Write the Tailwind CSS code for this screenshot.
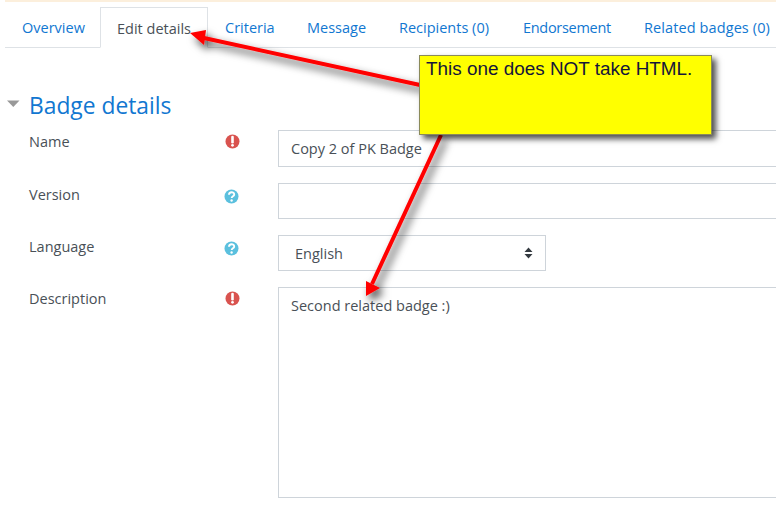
<!DOCTYPE html>
<html lang="en">
<head>
<meta charset="utf-8" />
<meta name="viewport" content="width=device-width, initial-scale=1" />
<title>Edit details</title>
<script src="https://cdn.jsdelivr.net/npm/@tailwindcss/browser@4"></script>
</head>
<body class="relative w-[776px] h-[509px] overflow-hidden bg-white font-['Open_Sans',sans-serif] text-[14.5px] text-[#495057]">
  <!-- top alert edge -->
  <div class="ml-[5px] h-[2px] bg-[#fcefdc]"></div>

  <!-- tabs -->
  <nav class="ml-[5px] mt-[5px] h-[41px] flex border-b border-[#dee2e6] whitespace-nowrap text-[#1177d1]">
    <a class="w-[95px] shrink-0 pl-[17px] pt-[10px]">Overview</a>
    <a class="w-[108px] shrink-0 h-[41px] pl-[16px] pt-[10px] bg-white text-[#495057] border border-[#dee2e6] border-b-white">Edit details</a>
    <a class="w-[83px] shrink-0 pl-[17px] pt-[10px]">Criteria</a>
    <a class="w-[91px] shrink-0 pl-[16px] pt-[10px]">Message</a>
    <a class="w-[124px] shrink-0 pl-[17px] pt-[10px]">Recipients (0)</a>
    <a class="w-[121px] shrink-0 pl-[17px] pt-[10px] tracking-[-0.3px]">Endorsement</a>
    <a class="shrink-0 pl-[17px] pt-[10px] tracking-[0.1px]">Related badges (0)</a>
  </nav>

  <!-- section heading -->
  <div class="mt-[43px] h-[30px] flex items-center">
    <svg class="ml-[7px] mt-[-4px]" width="13" height="8" viewBox="0 0 13 8"><path d="M0 0.500H12.500L6.300 7Z" fill="#999"/></svg>
    <h3 class="ml-[9px] text-[22.800px] leading-[30px] text-[#1177d1]">Badge details</h3>
  </div>

  <!-- form -->
  <form class="mt-[9px] flex flex-col">
    <div class="flex h-[36px]">
      <label class="w-[225px] shrink-0 pl-[29px] leading-[24px]">Name</label>
      <div class="w-[53px] shrink-0 pt-[4px]">
        <svg width="15" height="15" viewBox="0 0 15 15"><circle cx="7.500" cy="7.500" r="7" fill="#d9534f"/><path d="M7.500 3v5.300" stroke="#fff" stroke-width="2.600" stroke-linecap="round"/><circle cx="7.500" cy="11.300" r="1.400" fill="#fff"/></svg>
      </div>
      <div class="w-[520px] shrink-0 h-[37px] pl-[12px] leading-[36px] border border-[#ced4da]">Copy 2 of PK Badge</div>
    </div>
    <div class="flex h-[36px] mt-[17px]">
      <label class="w-[225px] shrink-0 pl-[29px] leading-[24px]">Version</label>
      <div class="w-[53px] shrink-0 pt-[6px]">
        <svg class="-ml-px" width="15" height="15" viewBox="0 0 15 15"><circle cx="7.500" cy="7.500" r="7" fill="#5bc0de"/><path d="M5 5.700c0-3.200 5.200-3.200 5.200-.3 0 1.900-2.500 1.800-2.500 3.600" fill="none" stroke="#fff" stroke-width="1.900"/><circle cx="7.600" cy="11.500" r="1.200" fill="#fff"/></svg>
      </div>
      <div class="w-[520px] shrink-0 h-[36px] border border-[#ced4da]"></div>
    </div>
    <div class="flex h-[36px] mt-[16px]">
      <label class="w-[225px] shrink-0 pl-[29px] leading-[24px]">Language</label>
      <div class="w-[53px] shrink-0 pt-[6px]">
        <svg class="-ml-px" width="15" height="15" viewBox="0 0 15 15"><circle cx="7.500" cy="7.500" r="7" fill="#5bc0de"/><path d="M5 5.700c0-3.200 5.200-3.200 5.200-.3 0 1.900-2.500 1.800-2.500 3.600" fill="none" stroke="#fff" stroke-width="1.900"/><circle cx="7.600" cy="11.500" r="1.200" fill="#fff"/></svg>
      </div>
      <div class="w-[268px] shrink-0 h-[36px] pl-[16px] pr-[12px] flex items-center justify-between border border-[#ced4da]">
        <span class="pt-[1px]">English</span>
        <svg width="9" height="12" viewBox="0 0 9 12"><path d="M4.500 0.500L8.500 5H0.500ZM4.500 11.500L0.500 7H8.500Z" fill="#343a40"/></svg>
      </div>
    </div>
    <div class="flex h-[211px] mt-[16px]">
      <label class="w-[225px] shrink-0 pl-[29px] leading-[24px]">Description</label>
      <div class="w-[53px] shrink-0 pt-[4px]">
        <svg width="15" height="15" viewBox="0 0 15 15"><circle cx="7.500" cy="7.500" r="7" fill="#d9534f"/><path d="M7.500 3v5.300" stroke="#fff" stroke-width="2.600" stroke-linecap="round"/><circle cx="7.500" cy="11.300" r="1.400" fill="#fff"/></svg>
      </div>
      <div class="w-[520px] shrink-0 h-[211px] pl-[12px] pt-[7px] border border-[#ced4da]">Second related badge :)</div>
    </div>
  </form>

  <!-- annotation arrows -->
  <svg class="absolute left-0 top-0 pointer-events-none" width="776" height="509" viewBox="0 0 776 509">
    <defs>
      <filter id="arrowShadow" x="-20%" y="-20%" width="140%" height="140%">
        <feDropShadow dx="4" dy="5" stdDeviation="4" flood-color="#000" flood-opacity="0.75"/>
      </filter>
    </defs>
    <g filter="url(#arrowShadow)" fill="#f00">
      <path d="M420 85L204 38" stroke="#f00" stroke-width="4"/>
      <path d="M190 33L206 30L204 45Z"/>
      <path d="M441 135L372 284" stroke="#f00" stroke-width="4"/>
      <path d="M366 296L366 281L380 288Z"/>
    </g>
  </svg>

  <!-- callout -->
  <div class="absolute left-[419px] top-[55px] w-[293px] h-[80px] pl-[6px] bg-[#ff0] border border-[#8a8a5a] shadow-[4px_4px_6px_rgba(0,0,0,0.7)] font-['Liberation_Sans',sans-serif] text-[18.900px] leading-[26px] text-[#15153a]">This one does NOT take HTML.</div>
</body>
</html>
